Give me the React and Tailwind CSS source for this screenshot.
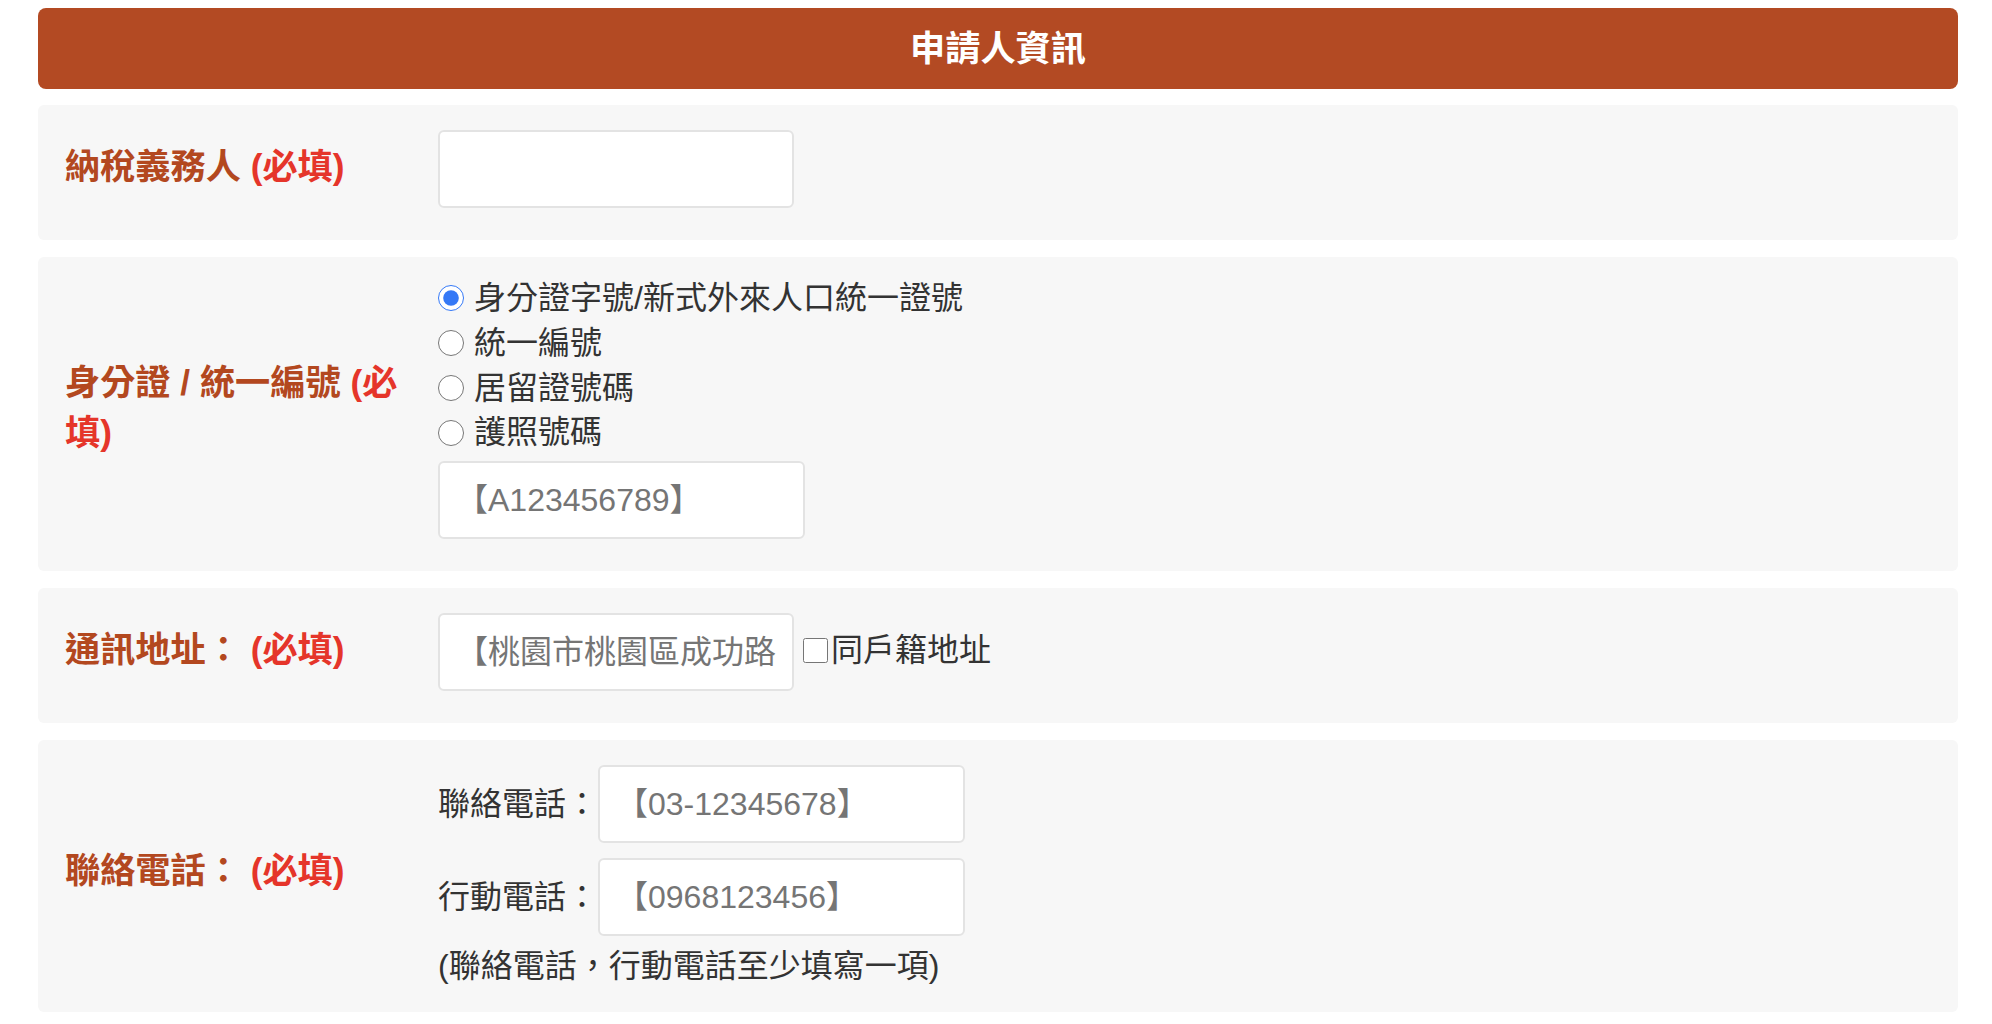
import React, { useState } from "react";

const font = { fontFamily: '"Liberation Sans", "Noto Sans CJK TC", sans-serif' };

const Required = () => <span className="text-[#e5352a]">(必填)</span>;

const FieldLabel = ({ children, className = "" }) => (
  <div
    className={`w-[348px] shrink-0 text-[35.2px] font-bold leading-[1.4] text-[#b3481f] ${className}`}
  >
    {children}
  </div>
);

const TextBox = ({ placeholder = "", width = "w-[356px]" }) => (
  <input
    type="text"
    placeholder={placeholder}
    className={`${width} h-[78px] rounded-[6px] border-2 border-[#e3e3e3] bg-white px-[16px] text-[32px] text-[#333] outline-none placeholder:text-[#757575]`}
  />
);

const Card = ({ children, className = "" }) => (
  <div className={`flex items-center rounded-[6px] bg-[#f7f7f7] pl-[27px] pr-[27px] ${className}`}>
    {children}
  </div>
);

const idTypes = ["身分證字號/新式外來人口統一證號", "統一編號", "居留證號碼", "護照號碼"];

export default function App() {
  const [idType, setIdType] = useState(0);
  const [sameAddr, setSameAddr] = useState(false);

  return (
    <div className="min-h-screen bg-white pl-[38px] pr-[34px] pt-[8px] text-[32px] leading-[1.4] text-[#333]" style={font}>
      <div className="flex h-[81px] items-center justify-center rounded-[8px] bg-[#b34a23] text-[35.2px] font-bold text-white">
        申請人資訊
      </div>

      <Card className="mt-[16px] pt-[25px] pb-[32px]">
        <FieldLabel className="pb-[5px]">
          納稅義務人 <Required />
        </FieldLabel>
        <div className="ml-[25px]">
          <TextBox />
        </div>
      </Card>

      <Card className="mt-[17px] pt-[19px] pb-[32px]">
        <FieldLabel>
          身分證 / 統一編號 <Required />
        </FieldLabel>
        <div className="ml-[25px] flex flex-col">
          {idTypes.map((t, i) => (
            <label key={t} className="flex h-[44.8px] items-center gap-[10px]">
              <input
                type="radio"
                name="idType"
                checked={idType === i}
                onChange={() => setIdType(i)}
                className="m-0 h-[26px] w-[26px] accent-[#3478f6]"
              />
              <span>{t}</span>
            </label>
          ))}
          <div className="mt-[6px]">
            <TextBox placeholder="【A123456789】" width="w-[367px]" />
          </div>
        </div>
      </Card>

      <Card className="mt-[17px] pt-[25px] pb-[32px]">
        <FieldLabel className="pb-[5px]">
          通訊地址： <Required />
        </FieldLabel>
        <div className="ml-[25px] flex items-center">
          <TextBox placeholder="【桃園市桃園區成功路2段】" />
          <label className="flex items-center pb-[4px]">
            <input
              type="checkbox"
              checked={sameAddr}
              onChange={() => setSameAddr(!sameAddr)}
              className="m-0 ml-[9px] mr-[3px] h-[25px] w-[25px]"
            />
            <span>同戶籍地址</span>
          </label>
        </div>
      </Card>

      <Card className="mt-[17px] pt-[25px] pb-[23px]">
        <FieldLabel className="pb-[13px]">
          聯絡電話： <Required />
        </FieldLabel>
        <div className="ml-[25px] flex flex-col">
          <div className="flex items-center">
            <span className="w-[160px] shrink-0">聯絡電話：</span>
            <TextBox placeholder="【03-12345678】" width="w-[367px]" />
          </div>
          <div className="mt-[15px] flex items-center">
            <span className="w-[160px] shrink-0">行動電話：</span>
            <TextBox placeholder="【0968123456】" width="w-[367px]" />
          </div>
          <div className="mt-[8px]">(聯絡電話，行動電話至少填寫一項)</div>
        </div>
      </Card>
    </div>
  );
}
